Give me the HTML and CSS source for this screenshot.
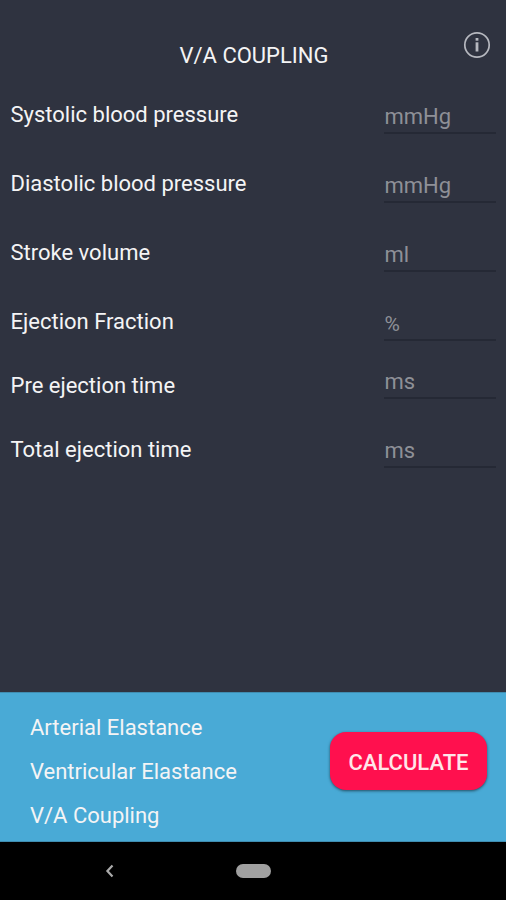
FILE: index.html
```html
<!DOCTYPE html>
<html lang="en">
<head>
<meta charset="utf-8">
<title>V/A Coupling</title>
<link rel="stylesheet" href="styles.css">
</head>
<body>
<main class="form">
  <header class="header">
    <h1 class="title">V/A COUPLING</h1>
    <svg class="info" viewBox="0 0 28 28" fill="none" stroke="#b6b8bf"><circle cx="14" cy="14" r="12.2" stroke-width="1.7"/><path d="M14 11.3v9.2" stroke-width="2.8"/><path d="M14 7v2.7" stroke-width="2.8"/></svg>
  </header>
  <div class="row"><span class="label">Systolic blood pressure</span><span class="field">mmHg</span></div>
  <div class="row"><span class="label">Diastolic blood pressure</span><span class="field">mmHg</span></div>
  <div class="row"><span class="label">Stroke volume</span><span class="field">ml</span></div>
  <div class="row"><span class="label">Ejection Fraction</span><span class="field field-percent">%</span></div>
  <div class="row row-pre"><span class="label">Pre ejection time</span><span class="field">ms</span></div>
  <div class="row row-total"><span class="label">Total ejection time</span><span class="field">ms</span></div>
</main>
<section class="results">
  <div class="outputs">
    <div class="output">Arterial Elastance</div>
    <div class="output">Ventricular Elastance</div>
    <div class="output">V/A Coupling</div>
  </div>
  <button class="calculate">CALCULATE</button>
</section>
<nav class="navbar">
  <svg class="back" viewBox="0 0 12 16" fill="none" stroke="#aaa" stroke-width="2.2"><path d="M8.5 2.5L3.4 8l5.1 5.5"/></svg>
  <span class="home"></span>
</nav>
</body>
</html>
```
FILE: styles.css
```css
* { box-sizing: border-box; }
body {
  margin: 0;
  height: 900px;
  display: flex;
  flex-direction: column;
  background: #2f3340;
  color: #f4f4f5;
  font-family: Roboto, sans-serif;
  font-size: 22px;
  overflow: hidden;
}
.form { height: 692px; }
.header {
  height: 92px;
  display: grid;
  grid-template-columns: 45px 1fr 43px;
}
.title {
  grid-column: 2;
  margin: 43px 0 0;
  font-size: 22px;
  font-weight: 400;
  line-height: 26px;
  text-align: center;
}
.info { width: 28px; height: 28px; margin-top: 31px; }
.row {
  height: 69px;
  padding: 10px 10px 0 10.5px;
  display: flex;
  justify-content: space-between;
}
.label { line-height: 26px; }
.field {
  width: 112px;
  height: 32px;
  padding-left: 0.5px;
  line-height: 30px;
  color: #8e9097;
  border-bottom: 2px solid #252935;
}
.field-percent { font-size: 21px; }
.row-pre { height: 64px; padding-top: 5px; }
.row-pre .field { margin-top: -6px; }
.row-total { height: 64px; padding-top: 5px; }
.row-total .field { margin-top: -1px; }
.results {
  height: 150px;
  padding: 13px 19px 0 30px;
  display: flex;
  justify-content: space-between;
  background: #49aad6;
  border-top: 1px solid #408db1;
  border-bottom: 1px solid #408db1;
}
.outputs { display: grid; grid-auto-rows: 44px; }
.output { line-height: 44px; }
.calculate {
  width: 157px;
  height: 58px;
  margin-top: 26px;
  padding: 2px 0 0;
  border: 0;
  border-radius: 16px;
  background: #ff104e;
  box-shadow: 0 1px 3px rgba(0, 0, 0, .55);
  color: #ffe6e9;
  font: 500 22px Roboto, sans-serif;
}
.navbar {
  height: 58px;
  display: grid;
  grid-template-columns: 104px 132px 1fr;
  align-items: center;
  background: #000;
}
.back { grid-column: 2; width: 12px; height: 16px; }
.home { width: 35px; height: 14px; border-radius: 7px; background: #a0a0a0; }
```
